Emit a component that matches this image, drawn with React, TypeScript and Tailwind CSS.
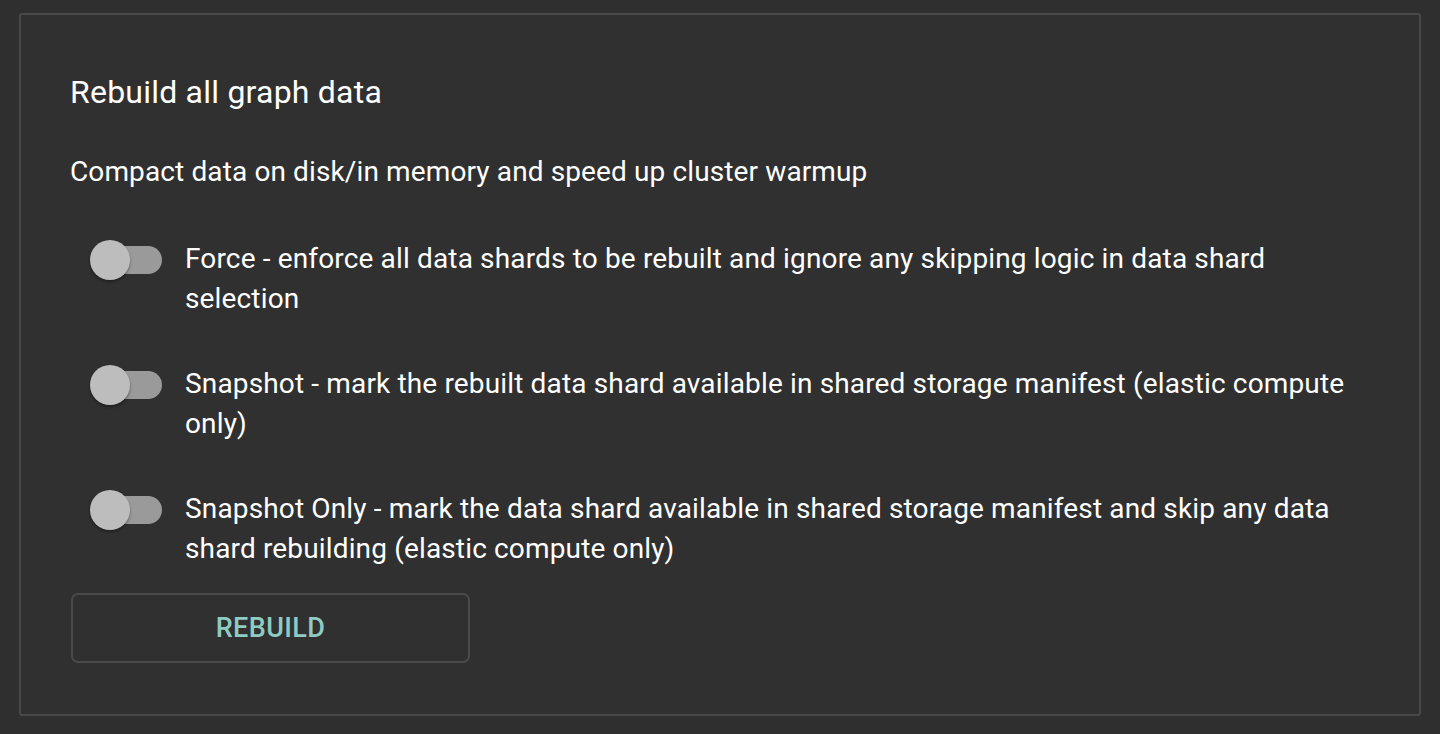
import React from 'react'

const options = [
    {
        id: 'force',
        label: 'Force - enforce all data shards to be rebuilt and ignore any skipping logic in data shard selection',
    },
    {
        id: 'snapshot',
        label: 'Snapshot - mark the rebuilt data shard available in shared storage manifest (elastic compute only)',
    },
    {
        id: 'snapshot-only',
        label: 'Snapshot Only - mark the data shard available in shared storage manifest and skip any data shard rebuilding (elastic compute only)',
    },
]

function Toggle() {
    return (
        <div className="relative w-[72px] h-[40px] shrink-0 flex items-center">
            <div className="absolute left-[4px] w-[68px] h-[28px] rounded-full bg-[#9a9a9a]" />
            <div className="absolute left-0 w-[40px] h-[40px] rounded-full bg-[#bdbdbd] shadow-[0_2px_3px_rgba(0,0,0,0.35)]" />
        </div>
    )
}

export default function App() {
    return (
        <div
            className="min-h-screen bg-[#2f2f2f] pl-[19px] pt-[13px] pr-[19px] pb-[18px]"
            style={{ fontFamily: 'Roboto, "Liberation Sans", sans-serif' }}
        >
            <div className="h-[703px] border-2 border-[#484848] rounded-[3px] bg-[#303030] pl-[49px] pr-[50px] pt-[57px]">
                <h1 className="text-[32px] leading-[40px] tracking-[0.22px] text-white">Rebuild all graph data</h1>
                <p className="mt-[40px] text-[28px] leading-[40px] tracking-[0.12px] text-white">
                    Compact data on disk/in memory and speed up cluster warmup
                </p>

                <div className="mt-[47px] flex flex-col gap-[45px]">
                    {options.map((opt) => (
                        <div key={opt.id} className="flex items-start">
                            <div className="ml-[20px] mr-[23px] pt-[1px]">
                                <Toggle />
                            </div>
                            <span className="text-[28px] leading-[40px] tracking-[0.15px] text-white">{opt.label}</span>
                        </div>
                    ))}
                </div>

                <button className="mt-[24px] ml-[1px] w-[399px] h-[70px] border-2 border-[#4a4a4a] rounded-[7px] flex items-center justify-center text-[27px] font-medium tracking-[0.4px] text-[#8ecbc3] uppercase">
                    Rebuild
                </button>
            </div>
        </div>
    )
}
